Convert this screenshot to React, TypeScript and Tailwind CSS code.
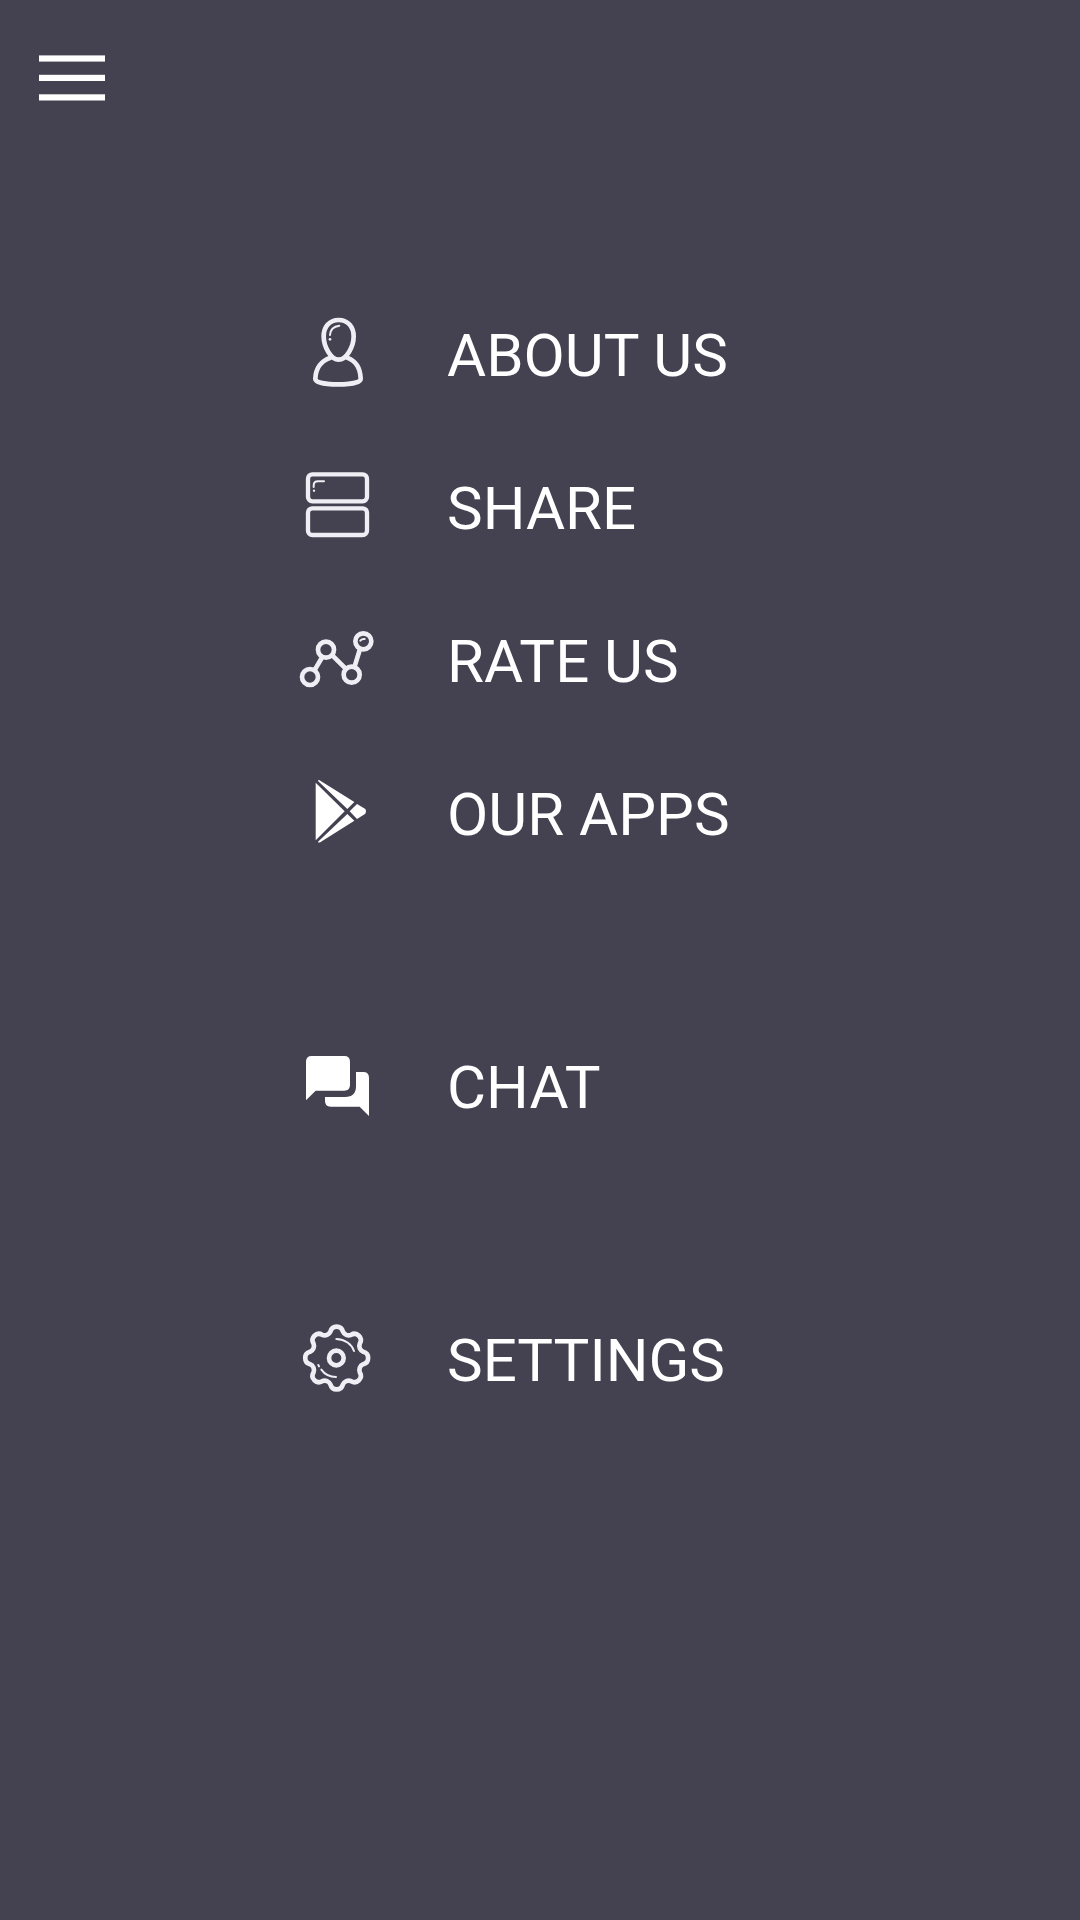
import React from "react";

// Outline of the cog: eight round teeth joined by shallow hollows
function cogPath(teeth: number, radius: number, bend: number) {
  const step = 360 / teeth;
  const point = (deg: number) => {
    const rad = (deg * Math.PI) / 180;
    return `${(140 + radius * Math.sin(rad)).toFixed(2)} ${(144 - radius * Math.cos(rad)).toFixed(2)}`;
  };
  let d = `M${point(-13)}`;
  for (let i = 0; i < teeth; i++) {
    d += `A${bend} ${bend} 0 0 1 ${point(i * step + 13)}`;
    d += `A${bend} ${bend} 0 0 0 ${point((i + 1) * step - 13)}`;
  }
  return d + "Z";
}

const iconClass = "size-[100px] shrink-0";

function PersonIcon() {
  return (
    <svg viewBox="0 0 300 300" className={iconClass} fill="none" stroke="#efeef4" strokeWidth="14" strokeLinecap="round" aria-hidden="true">
      <path d="M146 45C117 45 101 67 101 94C101 126 123 164 146 164C169 164 191 126 191 94C191 67 175 45 146 45Z" />
      <path d="M121 158C94 167 77 190 76 221C76 233 110 238 144 238C178 238 212 233 212 221C211 190 196 167 171 158" />
      <path d="M120 90C121 74 132 64 148 62" strokeWidth="6" />
      <circle cx="120" cy="103" r="4" fill="#efeef4" stroke="none" />
    </svg>
  );
}

function ShareIcon() {
  return (
    <svg viewBox="0 9 300 300" className={iconClass} fill="none" stroke="#efeef4" strokeWidth="13" strokeLinecap="round" aria-hidden="true">
      <rect x="54" y="58" width="177" height="81" rx="13" />
      <rect x="54" y="160" width="177" height="80" rx="13" />
      <path d="M71 96V92Q71 79 84 79H102" strokeWidth="6" />
      <circle cx="72" cy="107" r="3.5" fill="#efeef4" stroke="none" />
    </svg>
  );
}

function RateIcon() {
  return (
    <svg viewBox="0 3 300 300" className={iconClass} fill="none" stroke="#efeef4" strokeWidth="14" aria-hidden="true">
      <circle cx="60" cy="201" r="24" />
      <circle cx="108" cy="119" r="24" />
      <circle cx="185" cy="194" r="24" />
      <circle cx="220" cy="94" r="24" />
      <path d="M75 178L97 141M127 136L167 176M194 169L210 117" />
      <path d="M211 92Q216 86 224 87" strokeWidth="6" strokeLinecap="round" />
    </svg>
  );
}

function PlayIcon() {
  return (
    <svg viewBox="0 12 300 300" className={iconClass} fill="white" aria-hidden="true">
      <path d="M77 68L164 154L77 241Z" />
      <path d="M84 63Q85 58 91 62L193 126L172 147Z" />
      <path d="M84 245Q86 250 92 246L193 182L172 162Z" />
      <path d="M201 132L226 147Q231 154 226 161L201 177L179 154Z" />
    </svg>
  );
}

function ChatIcon() {
  return (
    <svg viewBox="0 6 300 300" className={iconClass} fill="white" aria-hidden="true">
      <path d="M65 63H163Q180 63 180 80V150Q180 167 163 167H77L48 196V80Q48 63 65 63Z" />
      <path d="M198 111H220Q237 111 237 128V243L209 215H122Q105 215 105 198V186H165Q198 186 198 153Z" />
    </svg>
  );
}

function SettingsIcon() {
  return (
    <svg viewBox="0 0 300 300" className={iconClass} fill="none" stroke="#efeef4" strokeWidth="14" strokeLinejoin="round" aria-hidden="true">
      <path d={cogPath(8, 82, 19)} />
      <circle cx="139" cy="144" r="22" />
      <g strokeWidth="6" strokeLinecap="round">
        <path d="M139 87C165 88 185 102 192 123" />
        <path d="M94 179C104 193 119 201 138 201" />
        <path d="M85 165L87 169" />
      </g>
    </svg>
  );
}

const menuGroups = [
  [
    { label: "ABOUT US", Icon: PersonIcon },
    { label: "SHARE", Icon: ShareIcon },
    { label: "RATE US", Icon: RateIcon },
    { label: "OUR APPS", Icon: PlayIcon },
  ],
  [{ label: "CHAT", Icon: ChatIcon }],
  [{ label: "SETTINGS", Icon: SettingsIcon }],
];

function App() {
  return (
    <div className="min-h-screen bg-[#444151] font-[Roboto,sans-serif] text-white">
      {/* Top bar */}
      <header className="flex px-[39px] pt-[55px]">
        <button type="button" aria-label="Close menu" className="cursor-pointer">
          <svg viewBox="0 0 66 46" className="h-[46px] w-[66px]" fill="white" aria-hidden="true">
            <rect y="0.4" width="66" height="6.2" />
            <rect y="19.8" width="66" height="6.2" />
            <rect y="39.3" width="66" height="6.2" />
          </svg>
        </button>
      </header>

      {/* Menu */}
      <nav className="mx-auto mt-[204px] flex max-w-[500px] flex-col gap-[173px] pb-20">
        {menuGroups.map((group, index) => (
          <ul key={index} className="flex flex-col gap-[53px]">
            {group.map(({ label, Icon }) => (
              <li key={label}>
                <a href="#" className="flex items-center gap-[57px]">
                  <Icon />
                  <span className="pt-0.5 text-[60px] leading-[70px] whitespace-nowrap">
                    {label}
                  </span>
                </a>
              </li>
            ))}
          </ul>
        ))}
      </nav>
    </div>
  );
}

export default App;
